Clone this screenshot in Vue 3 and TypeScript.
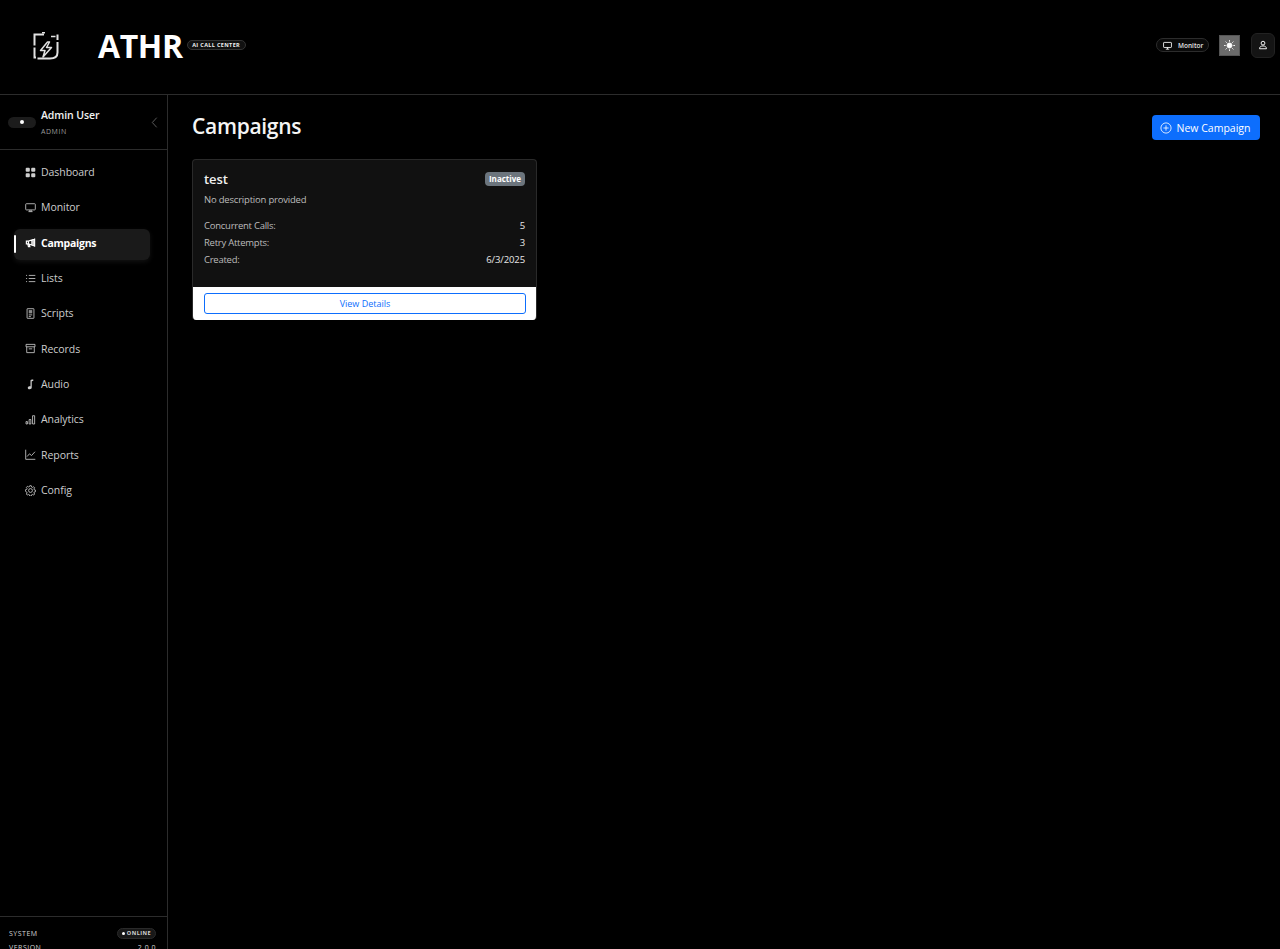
<script setup lang="ts">
interface NavItem { label: string; icon: string; active?: boolean; fill?: boolean }
const nav: NavItem[] = [
  { label: 'Dashboard', fill: true, icon: 'M1 2.500A1.500 1.500 0 0 1 2.500 1h3A1.500 1.500 0 0 1 7 2.500v3A1.500 1.500 0 0 1 5.500 7h-3A1.500 1.500 0 0 1 1 5.500zm8 0A1.500 1.500 0 0 1 10.500 1h3A1.500 1.500 0 0 1 15 2.500v3A1.500 1.500 0 0 1 13.500 7h-3A1.500 1.500 0 0 1 9 5.500zm-8 8A1.500 1.500 0 0 1 2.500 9h3A1.500 1.500 0 0 1 7 10.500v3A1.500 1.500 0 0 1 5.500 15h-3A1.500 1.500 0 0 1 1 13.500zm8 0A1.500 1.500 0 0 1 10.500 9h3a1.500 1.500 0 0 1 1.500 1.500v3a1.500 1.500 0 0 1-1.500 1.500h-3A1.500 1.500 0 0 1 9 13.500z' },
  { label: 'Monitor', icon: 'M2 2.500h12a1 1 0 0 1 1 1v7a1 1 0 0 1-1 1H2a1 1 0 0 1-1-1v-7a1 1 0 0 1 1-1zM5 14h6M7 11.500V14M9 11.500V14' },
  { label: 'Campaigns', active: true, icon: 'M14 2v12M14 3 5 6H2v4h3l9 3M5 6v4M4 10l1 4h2l-1-3.500M12 4v8M10 5v6' },
  { label: 'Lists', icon: 'M5.500 3.500H15M5.500 8H15M5.500 12.500H15M1.500 3.500h1.500M1.500 8h1.500M1.500 12.500h1.500' },
  { label: 'Scripts', icon: 'M3.500 1h9a.5.5 0 0 1 .5.5v13a.5.5 0 0 1-.5.5h-9a.5.5 0 0 1-.5-.5v-13a.5.5 0 0 1 .5-.5zM5.500 4h5M5.500 5.500h5M5.500 7h5M5.500 10h5M5.500 12.500h3' },
  { label: 'Records', icon: 'M1.500 2h13v3.500h-13zM2.500 5.500V14h11V5.500M5.500 8.500h5' },
  { label: 'Audio', fill: true, icon: 'M8 2.200C8 1 9.500.8 12 .8v2c-1.500 0-2.200.2-2.200 1v8.700c0 1.400-1.200 2.500-3 2.500S4 14 4 12.700s1.200-2.200 3-2.200c.4 0 .7.100 1 .2z' },
  { label: 'Analytics', icon: 'M1.500 11h2v3.500h-2zM6 8h2.500v6.500H6zM11 2.500h3v12h-3z' },
  { label: 'Reports', icon: 'M1 1v14h14M3 11l3.500-4 3 2.500L14.500 4' },
  { label: 'Config', icon: 'M8 5.200a2.800 2.800 0 1 0 0 5.600 2.800 2.800 0 0 0 0-5.600zM6.900 1h2.200l.4 1.900 1.300.6 1.700-1 1.500 1.600-1 1.600.5 1.400 1.900.4v2.200l-1.900.4-.5 1.400 1 1.600-1.500 1.600-1.700-1-1.300.6-.4 1.900H6.900l-.4-1.900-1.300-.6-1.700 1-1.500-1.600 1-1.600-.5-1.400L.6 9.100V6.900l1.900-.4.5-1.400-1-1.600 1.500-1.600 1.700 1 1.300-.6z' },
]
const stats = [
  { label: 'Concurrent Calls:', value: '5' },
  { label: 'Retry Attempts:', value: '3' },
  { label: 'Created:', value: '6/3/2025' },
]
</script>

<template>
  <div class="page">
    <header class="topbar">
      <div class="brand">
        <svg class="logo" viewBox="0 0 26 29" fill="none" stroke="#e2e2e2" stroke-width="2">
          <path d="M11 2.500H1.500V13.500M1.500 15.500V25.500H3M4.500 26.500h12.500c5 0 7.500-2 7.500-6V10M24.500 8V2.500" />
          <path d="M9 .8h3M18 4.500h4.500" stroke-width="1.400" />
          <path d="M14.500 10 7.500 18.500h4.500l-2 6.500 8.500-9.500h-5l3-5.500z" stroke-width="1.500" stroke-linejoin="round" />
        </svg>
        <span class="wordmark">ATHR</span>
        <span class="tag">AI CALL CENTER</span>
      </div>
      <div class="actions">
        <span class="monitor-pill">
          <svg viewBox="0 0 16 16" fill="none" stroke="#fff" stroke-width="1.500"><path d="M2 2.500h12a1 1 0 0 1 1 1v7a1 1 0 0 1-1 1H2a1 1 0 0 1-1-1v-7a1 1 0 0 1 1-1zM5 14.500h6M8 11.500v3" /></svg>
          Monitor
        </span>
        <button class="sun" type="button" aria-label="Theme">
          <svg viewBox="0 0 16 16" fill="#fff" stroke="#fff" stroke-width="1.300"><circle cx="8" cy="8" r="3.600" /><path d="M8 0v2.500M8 13.500V16M0 8h2.500M13.500 8H16M2.300 2.300 4 4M12 12l1.700 1.700M2.300 13.700 4 12M12 4l1.700-1.700" /></svg>
        </button>
        <button class="user" type="button" aria-label="User">
          <svg viewBox="0 0 16 16" fill="none" stroke="#fff" stroke-width="1.500"><circle cx="8" cy="5" r="3" /><path d="M2.500 14c0-3 2-4.500 5.500-4.500s5.500 1.500 5.500 4.500z" /></svg>
        </button>
      </div>
    </header>

    <div class="body">
      <aside class="sidebar">
        <div class="profile">
          <span class="toggle"><i></i></span>
          <div class="who">
            <strong>Admin User</strong>
            <small>ADMIN</small>
          </div>
          <svg class="chev" viewBox="0 0 8 14" fill="none" stroke="#666" stroke-width="1"><path d="M6.500 1.500 1.500 7l5 5.500" /></svg>
        </div>
        <nav class="nav">
          <a v-for="item in nav" :key="item.label" class="nav-item" :class="{ active: item.active }">
            <svg viewBox="0 0 16 16" :fill="item.fill ? 'currentColor' : 'none'" :stroke="item.fill ? 'none' : 'currentColor'" :stroke-width="item.active ? 1.700 : 1.200"><path :d="item.icon" /></svg>
            <span>{{ item.label }}</span>
          </a>
        </nav>
        <footer class="side-foot">
          <div class="foot-row">
            <span>SYSTEM</span>
            <span class="online"><i></i>ONLINE</span>
          </div>
          <div class="foot-row">
            <span>VERSION</span>
            <span>2.0.0</span>
          </div>
        </footer>
      </aside>

      <main class="main">
        <div class="title-row">
          <h1>Campaigns</h1>
          <button class="new" type="button">
            <svg viewBox="0 0 16 16" fill="none" stroke="#fff" stroke-width="1.100"><circle cx="8" cy="8" r="6.800" /><path d="M8 4.500v7M4.500 8h7" /></svg>
            New Campaign
          </button>
        </div>
        <section class="card">
          <div class="card-body">
            <div class="card-head">
              <h2>test</h2>
              <span class="badge">Inactive</span>
            </div>
            <p class="desc">No description provided</p>
            <dl class="stats">
              <div v-for="s in stats" :key="s.label">
                <dt>{{ s.label }}</dt>
                <dd>{{ s.value }}</dd>
              </div>
            </dl>
          </div>
          <div class="card-foot">
            <button class="details" type="button">View Details</button>
          </div>
        </section>
      </main>
    </div>
  </div>
</template>

<style>
html, body { margin: 0; background: #000; overflow: hidden; }
</style>

<style scoped>
.page { width: 1280px; height: 949px; background: #000; color: #fff; font-family: "Open Sans", "Noto Sans", sans-serif; overflow: hidden; display: flex; flex-direction: column; }
.topbar { height: 94px; flex: none; box-sizing: content-box; border-bottom: 1px solid #2c2c2c; display: flex; align-items: center; justify-content: space-between; padding: 0 5px 0 33px; }
.brand { display: flex; align-items: center; }
.logo { width: 26px; height: 29px; margin-top: -1px; }
.wordmark { margin-left: 39px; margin-bottom: 3px; font-size: 32px; line-height: 40px; font-weight: 700; letter-spacing: -.4px; }
.tag { margin-left: 4px; margin-bottom: 5px; height: 10px; line-height: 8px; box-sizing: border-box; width: 59px; text-align: center; border: 1px solid #333; border-radius: 6px; background: #111; font-size: 5.500px; font-weight: 700; letter-spacing: .35px; white-space: nowrap; color: #f0f0f0; }
.actions { display: flex; align-items: center; padding-bottom: 4px; }
.monitor-pill { width: 53px; height: 14px; box-sizing: border-box; border: 1px solid #2c2c2c; border-radius: 7px; background: #0a0a0a; display: flex; align-items: center; gap: 6px; padding-left: 6px; font-size: 6.500px; font-weight: 600; color: #e4e4e4; }
.monitor-pill svg { width: 9px; height: 9px; }
.sun { margin-left: 10px; width: 21px; height: 21px; padding: 0; border: 1px solid #555; background: #6a6a6a; display: flex; align-items: center; justify-content: center; }
.sun svg { width: 11px; height: 11px; }
.user { margin-left: 11px; width: 24px; height: 25px; padding: 0; border: 1px solid #222; border-radius: 6px; background: #141414; display: flex; align-items: center; justify-content: center; }
.user svg { width: 10px; height: 10px; }

.body { flex: 1; display: flex; min-height: 0; }
.sidebar { width: 168px; flex: none; box-sizing: border-box; border-right: 1px solid #2c2c2c; display: flex; flex-direction: column; }
.profile { height: 55px; flex: none; box-sizing: border-box; border-bottom: 1px solid #2c2c2c; display: flex; align-items: center; padding: 0 9px 0 8px; }
.toggle { width: 28px; height: 11px; background: #1c1c1c; border-radius: 6px; display: flex; align-items: center; justify-content: center; }
.toggle i { width: 4px; height: 4px; border-radius: 50%; background: #fff; }
.who { margin-left: 5px; flex: 1; display: flex; flex-direction: column; gap: 3px; }
.who strong { font-size: 10.500px; line-height: 15px; font-weight: 600; color: #f2f2f2; letter-spacing: -.1px; }
.who small { font-size: 7px; line-height: 11px; letter-spacing: .55px; color: #9a9a9a; }
.chev { width: 7px; height: 13px; margin-right: 0; }
.nav { padding: 8px 17px 0 14px; display: flex; flex-direction: column; gap: 4.350px; }
.nav-item { height: 31px; box-sizing: border-box; display: flex; align-items: center; gap: 5px; padding: 0 0 3px 11px; font-size: 10.500px; letter-spacing: -.05px; color: #cdcdcd; position: relative; border-radius: 6px; }
.nav-item svg { width: 11px; height: 11px; flex: none; }
.nav-item.active { background: #1a1a1a; box-shadow: 0 2px 5px rgba(255, 255, 255, .07); color: #fff; font-weight: 700; letter-spacing: -.25px; }
.nav-item.active::before { content: ""; position: absolute; left: 0; top: 6px; width: 2px; height: 18px; background: #fff; border-radius: 1px; }
.side-foot { margin-top: auto; height: 33px; flex: none; box-sizing: border-box; border-top: 1px solid #2c2c2c; padding: 11px 11px 0 9px; overflow: hidden; display: flex; flex-direction: column; gap: 2.500px; }
.foot-row { display: flex; align-items: center; justify-content: space-between; font-size: 7px; line-height: 11px; letter-spacing: .5px; color: #d4d4d4; }
.online { height: 11px; width: 39px; box-sizing: border-box; background: #181818; border: 1px solid #2a2a2a; border-radius: 6px; font-size: 5.500px; font-weight: 700; display: flex; align-items: center; justify-content: center; gap: 2px; }
.online i { width: 3px; height: 3px; border-radius: 50%; background: #fff; }

.main { flex: 1; padding: 20px 20px 0 24px; min-width: 0; }
.title-row { display: flex; align-items: center; justify-content: space-between; height: 25px; margin-bottom: 19px; }
h1 { margin: 0 0 2px; font-size: 21px; line-height: 25px; font-weight: 600; letter-spacing: -.3px; color: #f5f5f5; }
.new { width: 108px; height: 25px; border: 0; padding: 0 2px 0 0; box-sizing: border-box; border-radius: 4px; background: #0d6efd; color: #fff; font: inherit; font-size: 10.500px; display: flex; align-items: center; justify-content: center; gap: 5px; }
.new svg { width: 12px; height: 12px; }
.card { width: 345px; height: 161px; box-sizing: border-box; border: 1px solid #2a2a2a; border-bottom: 0; border-radius: 4px; overflow: hidden; display: flex; flex-direction: column; background: #111; }
.card-body { flex: 1; padding: 11px 11px 0; }
.card-head { display: flex; justify-content: space-between; align-items: flex-start; }
h2 { margin: 0; font-size: 13px; line-height: 17px; font-weight: 600; letter-spacing: -.1px; color: #f0f0f0; }
.badge { margin-top: 1px; width: 40px; height: 14px; line-height: 14px; text-align: center; background: #6c757d; border-radius: 4px; font-size: 8px; font-weight: 700; color: #fff; }
.desc { margin: 5px 0 0; font-size: 9.500px; line-height: 14px; letter-spacing: -.2px; color: #bcbcbc; }
.stats { margin: 12px 0 0; display: flex; flex-direction: column; gap: 4px; }
.stats div { display: flex; justify-content: space-between; font-size: 9.500px; line-height: 13px; letter-spacing: -.25px; }
dt { color: #bcbcbc; }
dd { margin: 0; color: #e8e8e8; letter-spacing: -.1px; }
.card-foot { height: 33px; flex: none; background: #fff; padding: 6px 10px 0 11px; box-sizing: border-box; }
.details { display: block; width: 100%; height: 21px; padding: 0; background: #fff; border: 1px solid #0d6efd; border-radius: 3px; color: #0d6efd; font: inherit; font-size: 9px; }
</style>
